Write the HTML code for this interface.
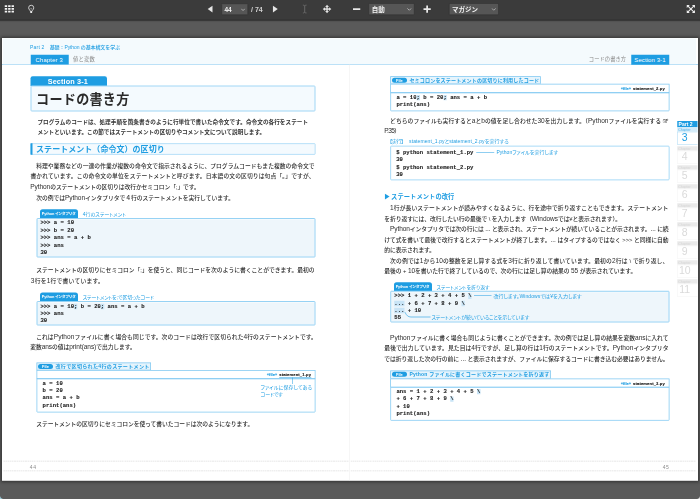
<!DOCTYPE html>
<html lang="ja"><head><meta charset="utf-8"><title>コードの書き方</title>
<style>
html,body{margin:0;padding:0;}
body{width:700px;height:499px;overflow:hidden;background:#5a5a5a;position:relative;}
#wrap{position:absolute;left:0;top:0;width:2800px;height:1996px;transform:scale(0.25);transform-origin:0 0;font-family:"Liberation Sans","Noto Sans CJK JP",sans-serif;}
#tb{position:absolute;left:-20px;top:0;width:2840px;height:76.4px;background:#3b3b3b;border-bottom:6.8px solid #353535;box-shadow:0 1.2px 4.8px 0.4px rgba(0,0,0,.5);}
#pg{position:absolute;left:7.6px;top:151.6px;width:2784.8px;height:1771.2px;background:#fff;box-shadow:0 0 12px 4px rgba(0,0,0,.45);}
.r{position:absolute;}
.ic{position:absolute;display:block;overflow:visible;}
.l{position:absolute;white-space:nowrap;line-height:40px;font-size:23.2px;color:#333;font-family:"Liberation Sans","Noto Sans CJK JP",sans-serif;}
.b{font-weight:500;color:#2e2e2e;}
.e{font-size:1.13em;}
.in{font-weight:700;font-size:22.4px;color:#333;}
.c{font-family:"Liberation Mono",monospace;font-weight:700;font-size:22.4px;line-height:32px;color:#1c1c1c;white-space:pre;-webkit-text-stroke:0.4px #1c1c1c;}
.hl{background:linear-gradient(#c8e4f6,#c8e4f6) no-repeat 0 4.4px / 100% 24px;}
.hp{font-size:20px;line-height:28px;font-weight:500;color:#1e9de2;font-family:"Liberation Sans","Noto Sans CJK JP",sans-serif;}
.ch{font-family:"Liberation Sans",sans-serif;font-size:24px;line-height:32px;color:#fff;}
.chg{font-size:21.2px;line-height:32px;color:#8a8a8a;}
.sec{font-size:29.2px;line-height:40px;font-weight:700;color:#fff;}
.h1{font-size:52.4px;line-height:76px;font-weight:700;color:#2a2a2a;}
.h2{font-size:32px;line-height:44px;font-weight:700;color:#1e9de2;}
.h3{font-size:25px;line-height:40px;font-weight:700;color:#1e9de2;}
.tab{position:absolute;background:#1e9de2;border-radius:10.4px 10.4px 0 0;}
.tbx{font-size:15.4px;line-height:32px;font-weight:700;color:#fff;font-feature-settings:"palt";}
.ttl{font-size:19.8px;line-height:32px;font-weight:400;color:#1e9de2;font-feature-settings:"palt";}
.pill{position:absolute;width:60px;height:20px;border-radius:10px;background:#1e9de2;text-align:center;}
.pill span{display:block;font-family:"Liberation Sans","Noto Sans CJK JP",sans-serif;font-size:16px;line-height:19.2px;font-weight:900;color:#fff;}
.ftl{font-size:20.2px;line-height:29.6px;font-weight:700;color:#1e9de2;}
.fn{font-size:16.4px;line-height:24px;font-weight:700;color:#111;-webkit-text-stroke:0.4px currentColor;}
.fb{color:#1e9de2;}
.an{font-size:20px;line-height:28px;color:#1e9de2;font-feature-settings:"palt";}
.ex{font-size:20px;line-height:28px;color:#1e9de2;font-feature-settings:"palt";}
.pn{font-size:20px;line-height:28px;color:#8c8c8c;}
.pt2{font-size:20px;line-height:28px;font-weight:700;color:#fff;}
.cl{font-size:14px;line-height:20px;}
.cn{font-size:42px;line-height:52px;text-align:center;font-weight:300;}
.sel{position:absolute;background:#565656;border:2px solid #2e2e2e;box-sizing:border-box;border-radius:3.2px;}
.sel span{position:absolute;top:0;font-family:"Liberation Sans","Noto Sans CJK JP",sans-serif;font-size:26px;line-height:44px;font-weight:700;color:#f4f4f4;white-space:nowrap;}
.sel .chev{position:absolute;right:8.8px;top:16.8px;width:18.4px;height:11.2px;}
.tbt{font-family:"Liberation Sans",sans-serif;font-size:28px;line-height:40px;font-weight:700;color:#cfcfcf;}
</style></head>
<body>
<div id="wrap">
<div id="tb"></div>
<svg class="ic" style="left:18.8px;top:20.8px;width:36.8px;height:29.2px" viewBox="0 0 9.2 7.3"><g fill="#f6f6f6"><rect x="0.00" y="0.00" width="2.4" height="1.75"/><rect x="3.40" y="0.00" width="2.4" height="1.75"/><rect x="6.80" y="0.00" width="2.4" height="1.75"/><rect x="0.00" y="2.75" width="2.4" height="1.75"/><rect x="3.40" y="2.75" width="2.4" height="1.75"/><rect x="6.80" y="2.75" width="2.4" height="1.75"/><rect x="0.00" y="5.50" width="2.4" height="1.75"/><rect x="3.40" y="5.50" width="2.4" height="1.75"/><rect x="6.80" y="5.50" width="2.4" height="1.75"/></g></svg>
<svg class="ic" style="left:112.4px;top:18.8px;width:25.6px;height:34.4px" viewBox="0 0 6.4 8.6"><path d="M3.2 0.5a2.55 2.55 0 0 0-2.55 2.55c0 1 .5 1.6 1 2.2c.4.5.6.9.7 1.4h1.7c.1-.5.3-.9.7-1.4c.5-.6 1-1.2 1-2.2A2.55 2.55 0 0 0 3.2.5z" fill="none" stroke="#ededed" stroke-width="0.8"/><path d="M2.6 3.4L3.2 4.6L3.8 3.4" fill="none" stroke="#ddd" stroke-width="0.45"/><rect x="2.25" y="6.55" width="1.9" height="1.75" rx="0.5" fill="#ededed"/></svg>
<svg class="ic" style="left:829.6px;top:21.6px;width:20.8px;height:28.8px" viewBox="0 0 5.2 7.2"><path d="M5 0.2V7L0.2 3.6z" fill="#e6e6e6"/></svg>
<div class="sel" style="left:886.4px;top:14px;width:105.6px;height:46px;"><span style="left:9.2px">44</span><svg class="chev" viewBox="0 0 5 3"><path d="M0.4 0.4L2.5 2.5L4.6 0.4" fill="none" stroke="#ddd" stroke-width="0.7"/></svg></div>
<div class="l tbt" style="top:18px;left:1004px;">/ 74</div>
<svg class="ic" style="left:1091.2px;top:21.6px;width:20.8px;height:28.8px" viewBox="0 0 5.2 7.2"><path d="M0.2 0.2V7L5 3.6z" fill="#e6e6e6"/></svg>
<svg class="ic" style="left:1210.4px;top:19.2px;width:17.6px;height:34.4px" viewBox="0 0 4.4 8.6"><path d="M0.4 0.4C1.5 0.4 2.2 0.8 2.2 1.4C2.2 0.8 2.9 0.4 4 0.4M0.4 8.2C1.5 8.2 2.2 7.8 2.2 7.2C2.2 7.8 2.9 8.2 4 8.2M2.2 1.4V7.2" fill="none" stroke="#737373" stroke-width="0.8"/></svg>
<svg class="ic" style="left:1291.2px;top:18.8px;width:34.4px;height:34.4px" viewBox="0 0 8.6 8.6"><g fill="#e2e2e2"><path d="M4.3 0L6.2 2.3H2.4z"/><path d="M4.3 8.6L6.2 6.3H2.4z"/><path d="M0 4.3L2.3 2.4V6.2z"/><path d="M8.6 4.3L6.3 2.4V6.2z"/><rect x="3.6" y="1.8" width="1.4" height="5"/><rect x="1.8" y="3.6" width="5" height="1.4"/></g></svg>
<div class="r" style="left:1412px;top:33.2px;width:29.2px;height:6.8px;background:#e8e8e8;"></div>
<div class="sel" style="left:1474.4px;top:13.2px;width:183.2px;height:46.4px;"><span style="left:10.4px">自動</span><svg class="chev" viewBox="0 0 5 3"><path d="M0.4 0.4L2.5 2.5L4.6 0.4" fill="none" stroke="#ddd" stroke-width="0.7"/></svg></div>
<div class="r" style="left:1693.6px;top:33.2px;width:29.6px;height:6.8px;background:#e8e8e8;"></div>
<div class="r" style="left:1705px;top:21.6px;width:6.8px;height:29.6px;background:#e8e8e8;"></div>
<div class="sel" style="left:1796px;top:13.2px;width:199.2px;height:46.4px;"><span style="left:9.6px">マガジン</span><svg class="chev" viewBox="0 0 5 3"><path d="M0.4 0.4L2.5 2.5L4.6 0.4" fill="none" stroke="#ddd" stroke-width="0.7"/></svg></div>
<svg class="ic" style="left:2747.2px;top:20px;width:32.8px;height:32px" viewBox="0 0 8.2 8"><g fill="#efefef"><path d="M0 0H3L0 3z"/><path d="M8.2 0H5.2L8.2 3z"/><path d="M0 8H3L0 5z"/><path d="M8.2 8H5.2L8.2 5z"/></g><path d="M1.2 1.2L7 6.8M7 1.2L1.2 6.8" stroke="#efefef" stroke-width="1.1"/></svg>
<div class="r" style="left:0px;top:1984px;width:12px;height:12px;background:radial-gradient(circle at 100% 0,rgba(0,0,0,0) 9.6px,#9ccbd9 12.4px);"></div>
<div class="r" style="left:2790.4px;top:1986.4px;width:9.6px;height:9.6px;background:radial-gradient(circle at 0 0,rgba(0,0,0,0) 7.2px,#dcdcdc 10px);"></div>
<div id="pg"></div>
<div class="r" style="left:7.6px;top:256.8px;width:2784px;height:2.8px;background:#8ecdf0;"></div>
<div class="r" style="left:12.4px;top:154.4px;width:2771.2px;height:102.4px;background:#f4fafd;"></div>
<div class="r" style="left:1397.6px;top:258px;width:2.4px;height:1664px;background:#ececec;"></div>
<div class="l hp" style="top:173.2px;left:120px;letter-spacing:0.84px;">Part 2</div>
<div class="l hp" style="top:173.2px;left:198.8px;letter-spacing:-0.368px;">基礎：Python の基本構文を学ぶ</div>
<div class="r" style="left:122.8px;top:218.8px;width:152px;height:39.6px;background:#1e9de2;"></div>
<div class="l ch" style="top:222.8px;left:141.88px;letter-spacing:0.536px;">Chapter 3</div>
<div class="l chg" style="top:222px;left:291.56px;letter-spacing:0.832px;">値と変数</div>
<div class="r" style="left:122.4px;top:304.8px;width:305.6px;height:39.2px;background:#1e9de2;border-radius:8.8px 8.8px 0 0;"></div>
<div class="l sec" style="top:304px;left:190.84px;letter-spacing:0.456px;">Section 3-1</div>
<div class="r" style="left:122.4px;top:342.4px;width:1140px;height:104px;background:#f4fafe;border:4px solid #a0d6f5;border-radius:4.8px;box-sizing:border-box;"></div>
<div class="l h1" style="top:357.6px;left:144.32px;letter-spacing:1.008px;">コードの書き方</div>
<div class="l in" style="top:469.6px;left:149.52px;letter-spacing:0.232px;">プログラムのコードは、処理手順を箇条書きのように行単位で書いた命令文です。命令文の各行をステート</div>
<div class="l in" style="top:508.4px;left:149.52px;letter-spacing:-0.052px;">メントといいます。この節ではステートメントの区切りやコメント文について説明します。</div>
<div class="r" style="left:121.6px;top:573.2px;width:1140.8px;height:45.6px;background:#f4fafe;border:3.8px solid #a0d6f5;border-radius:4px;box-sizing:border-box;"></div>
<div class="r" style="left:121.6px;top:573.2px;width:8px;height:45.6px;background:#1e9de2;"></div>
<div class="l h2" style="top:574.4px;left:144.32px;letter-spacing:0.16px;">ステートメント（命令文）の区切り</div>
<div class="l b" style="top:642.8px;left:144.8px;letter-spacing:0.04px;">料理や業務などの一連の作業が複数の命令文で指示されるように、プログラムコードもまた複数の命令文で</div>
<div class="l b" style="top:684.8px;left:121.6px;letter-spacing:0.368px;">書かれています。この命令文の単位をステートメントと呼びます。日本語の文の区切りは句点「。」ですが、</div>
<div class="l b" style="top:726.8px;left:121.08px;letter-spacing:-0.332px;"><span class="e">Python</span>のステートメントの区切りは改行かセミコロン「;」です。</div>
<div class="l b" style="top:768.8px;left:144.68px;letter-spacing:-0.176px;">次の例では<span class="e">Python</span>インタプリタで４行のステートメントを実行しています。</div>
<div class="tab" style="left:160px;top:836.8px;width:152.4px;height:36px;"></div>
<div class="l tbx" style="top:838.8px;left:166.96px;letter-spacing:-0.38px;">Python インタプリタ</div>
<div class="l ttl" style="top:839.6px;left:330.76px;letter-spacing:0.284px;">4行のステートメント</div>
<div class="r" style="left:145.6px;top:871.6px;width:1116.8px;height:158.8px;background:#eef6fb;border:4px solid #96d2f4;border-radius:4px;box-shadow:inset 0 0 0 2px #fbfdff;box-sizing:border-box;"></div>
<div class="l c" style="top:874.4px;left:161.6px;">&gt;&gt;&gt; a = 10</div>
<div class="l c" style="top:904px;left:161.6px;">&gt;&gt;&gt; b = 20</div>
<div class="l c" style="top:934px;left:161.6px;">&gt;&gt;&gt; ans = a + b</div>
<div class="l c" style="top:964px;left:161.6px;">&gt;&gt;&gt; ans</div>
<div class="l c" style="top:992.8px;left:161.6px;">30</div>
<div class="l b" style="top:1060.4px;left:144.8px;letter-spacing:-0.052px;">ステートメントの区切りにセミコロン「;」を使うと、同じコードを次のように書くことができます。最初の</div>
<div class="l b" style="top:1102.4px;left:123.08px;letter-spacing:0.9px;"><span class="e">3</span>行を<span class="e">1</span>行で書いています。</div>
<div class="tab" style="left:160px;top:1170px;width:152.4px;height:35.2px;"></div>
<div class="l tbx" style="top:1172px;left:166.96px;letter-spacing:-0.38px;">Python インタプリタ</div>
<div class="l ttl" style="top:1172.8px;left:330.76px;letter-spacing:-0.368px;">ステートメントを;で区切ったコード</div>
<div class="r" style="left:145.6px;top:1204px;width:1116.8px;height:98px;background:#eef6fb;border:4px solid #96d2f4;border-radius:4px;box-shadow:inset 0 0 0 2px #fbfdff;box-sizing:border-box;"></div>
<div class="l c" style="top:1208px;left:161.6px;">&gt;&gt;&gt; a = 10<span class="hl">;</span> b = 20<span class="hl">;</span> ans = a + b</div>
<div class="l c" style="top:1238px;left:161.6px;">&gt;&gt;&gt; ans</div>
<div class="l c" style="top:1266.8px;left:161.6px;">30</div>
<div class="l b" style="top:1325.2px;left:144.68px;letter-spacing:0.216px;">これは<span class="e">Python</span>ファイルに書く場合も同じです。次のコードは改行で区切られた<span class="e">4</span>行のステートメントです。</div>
<div class="l b" style="top:1367.2px;left:121.08px;letter-spacing:-0.288px;">変数<span class="e">ans</span>の値は<span class="e">print(ans)</span>で出力します。</div>
<div class="r" style="left:145.6px;top:1450.4px;width:458.4px;height:31.6px;background:#e6f4fc;border:3.4px solid #7fc8f1;box-sizing:border-box;"></div>
<div class="pill" style="left:152px;top:1456px;"><span>File</span></div>
<div class="l ftl" style="top:1450.8px;left:222px;letter-spacing:1.22px;">改行で区切られた4行のステートメント</div>
<div class="r" style="left:145.6px;top:1480px;width:1116.8px;height:36.4px;background:#fff;border:3.4px solid #7fc8f1;box-sizing:border-box;"></div>
<div class="r" style="left:145.6px;top:1514.4px;width:1116.8px;height:135.2px;background:#fff;border:3.4px solid #7fc8f1;border-radius:0 0 4px 4px;box-sizing:border-box;"></div>
<div class="l fn fb" style="top:1485.2px;left:1067.36px;letter-spacing:-0.04px;">«file»</div>
<div class="l fn" style="top:1485.2px;left:1116.96px;letter-spacing:0.568px;">statement_1.py</div>
<div class="l c" style="top:1516px;left:170.4px;">a = 10</div>
<div class="l c" style="top:1545.6px;left:170.4px;">b = 20</div>
<div class="l c" style="top:1574.8px;left:170.4px;">ans = a + b</div>
<div class="l c" style="top:1605.2px;left:170.4px;">print(ans)</div>
<div class="r" style="left:1116.8px;top:1509.6px;width:128px;height:2px;background:#1e9de2;"></div>
<div class="r" style="left:1168.8px;top:1510.4px;width:2.4px;height:25.6px;background:#1e9de2;"></div>
<div class="l an" style="top:1534.8px;left:1042.44px;letter-spacing:0.58px;">ファイルに保存してある</div>
<div class="l an" style="top:1561.6px;left:1042.44px;letter-spacing:-0.556px;">コードです</div>
<div class="l b" style="top:1675.2px;left:144.68px;letter-spacing:-0.252px;">ステートメントの区切りにセミコロンを使って書いたコードは次のようになります。</div>
<div class="r" style="left:14px;top:1842.8px;width:1382px;height:2.8px;background:repeating-linear-gradient(90deg,#dedede 0,#dedede 4.4px,#efefef 4.4px,#efefef 8.8px);"></div>
<div class="r" style="left:14px;top:1882.4px;width:1382px;height:2.8px;background:repeating-linear-gradient(90deg,#dedede 0,#dedede 4.4px,#efefef 4.4px,#efefef 8.8px);"></div>
<div class="r" style="left:1402px;top:1842.8px;width:1382px;height:2.8px;background:repeating-linear-gradient(90deg,#dedede 0,#dedede 4.4px,#efefef 4.4px,#efefef 8.8px);"></div>
<div class="r" style="left:1402px;top:1882.4px;width:1382px;height:2.8px;background:repeating-linear-gradient(90deg,#dedede 0,#dedede 4.4px,#efefef 4.4px,#efefef 8.8px);"></div>
<div class="l pn" style="top:1854px;left:119.2px;letter-spacing:2.676px;">44</div>
<div class="l pn" style="top:1854px;left:2650.8px;letter-spacing:2.476px;">45</div>
<div class="l chg" style="top:222px;left:2355.16px;letter-spacing:0.196px;">コードの書き方</div>
<div class="r" style="left:2524.8px;top:218.8px;width:152px;height:39.6px;background:#1e9de2;"></div>
<div class="l ch" style="top:222.8px;left:2537.48px;letter-spacing:0.328px;">Section 3-1</div>
<div class="r" style="left:1561.2px;top:305.2px;width:601.6px;height:32px;background:#e6f4fc;border:3.4px solid #7fc8f1;box-sizing:border-box;"></div>
<div class="pill" style="left:1567.6px;top:310.8px;"><span>File</span></div>
<div class="l ftl" style="top:305.6px;left:1637.6px;letter-spacing:0.596px;">セミコロンをステートメントの区切りに利用したコード</div>
<div class="r" style="left:1561.2px;top:335.2px;width:1116.4px;height:36.8px;background:#fff;border:3.4px solid #7fc8f1;box-sizing:border-box;"></div>
<div class="r" style="left:1561.2px;top:370px;width:1116.4px;height:75.2px;background:#fff;border:3.4px solid #7fc8f1;border-radius:0 0 4px 4px;box-sizing:border-box;"></div>
<div class="l fn fb" style="top:340.4px;left:2482.56px;letter-spacing:-0.04px;">«file»</div>
<div class="l fn" style="top:340.4px;left:2532.16px;letter-spacing:0.568px;">statement_2.py</div>
<div class="l c" style="top:372.4px;left:1585.6px;">a = 10<span class="hl">;</span> b = 20<span class="hl">;</span> ans = a + b</div>
<div class="l c" style="top:402px;left:1585.6px;">print(ans)</div>
<div class="l b" style="top:462.4px;left:1560.4px;letter-spacing:0.136px;">どちらのファイルも実行すると<span class="e">a</span>と<span class="e">b</span>の値を足し合わせた<span class="e">30</span>を出力します。（<span class="e">Python</span>ファイルを実行する ☞</div>
<div class="l b" style="top:504.4px;left:1536.68px;letter-spacing:-2.488px;"><span class="e">P.35</span>）</div>
<div class="l ex" style="top:550.8px;left:1558.4px;letter-spacing:-1.2px;">【実行】</div>
<div class="l ex" style="top:550.8px;left:1636.4px;letter-spacing:0.388px;">statement_1.pyとstatement_2.pyを実行する</div>
<div class="r" style="left:1561.2px;top:583.2px;width:1116.4px;height:137.6px;background:#fff;border:3.8px solid #8ccff4;border-radius:4.8px;box-sizing:border-box;"></div>
<div class="l c" style="top:592.4px;left:1584.8px;">$ python statement_1.py</div>
<div class="l c" style="top:622.4px;left:1584.8px;">30</div>
<div class="l c" style="top:652px;left:1584.8px;">$ python statement_2.py</div>
<div class="l c" style="top:682px;left:1584.8px;">30</div>
<div class="r" style="left:1904.8px;top:607.6px;width:72px;height:2.4px;background:#1e9de2;"></div>
<div class="l an" style="top:594.4px;left:1985.64px;letter-spacing:0.208px;">Pythonファイルを実行します</div>
<svg class="ic" style="left:1539.2px;top:774.4px;width:20px;height:24.8px" viewBox="0 0 5 6.2"><path d="M0.2 0.2L4.8 3.1L0.2 6z" fill="#1e9de2"/></svg>
<div class="l h3" style="top:766.8px;left:1564.2px;letter-spacing:0.36px;">ステートメントの改行</div>
<div class="l b" style="top:812.4px;left:1560.4px;letter-spacing:0.272px;"><span class="e">1</span>行が長いステートメントが読みやすくなるように、行を途中で折り返すこともできます。ステートメント</div>
<div class="l b" style="top:854.4px;left:1537.08px;letter-spacing:-0.308px;">を折り返すには、改行したい行の最後で \ を入力します（<span class="e">Windows</span>では¥と表示されます）。</div>
<div class="l b" style="top:896.4px;left:1560.4px;letter-spacing:-0.436px;"><span class="e">Python</span>インタプリタでは次の行には <span class="e">...</span> と表示され、ステートメントが続いていることが示されます。<span class="e">...</span> に続</div>
<div class="l b" style="top:938.4px;left:1537.2px;letter-spacing:-0.156px;">けて式を書いて最後で改行するとステートメントが終了します。<span class="e">...</span> はタイプするのではなく &gt;&gt;&gt; と同様に自動</div>
<div class="l b" style="top:980.4px;left:1537.08px;letter-spacing:-0.432px;">的に表示されます。</div>
<div class="l b" style="top:1022.4px;left:1560.4px;letter-spacing:0.548px;">次の例では<span class="e">1</span>から<span class="e">10</span>の整数を足し算する式を<span class="e">3</span>行に折り返して書いています。最初の<span class="e">2</span>行は \ で折り返し、</div>
<div class="l b" style="top:1064.4px;left:1537.08px;letter-spacing:-0.26px;">最後の + <span class="e">10</span>を書いた行で終了しているので、次の行には足し算の結果の <span class="e">55</span> が表示されています。</div>
<div class="tab" style="left:1575.6px;top:1128.8px;width:152.4px;height:35.2px;"></div>
<div class="l tbx" style="top:1130.8px;left:1582.56px;letter-spacing:-0.38px;">Python インタプリタ</div>
<div class="l ttl" style="top:1131.6px;left:1746.36px;letter-spacing:-0.088px;">ステートメントを折り返す</div>
<div class="r" style="left:1561.2px;top:1162.8px;width:1116.4px;height:127.6px;background:#eef6fb;border:4px solid #96d2f4;border-radius:4px;box-shadow:inset 0 0 0 2px #fbfdff;box-sizing:border-box;"></div>
<div class="l c" style="top:1166.8px;left:1577.2px;">&gt;&gt;&gt; 1 + 2 + 3 + 4 + 5 <span class="hl">\</span></div>
<div class="l c" style="top:1196px;left:1577.2px;"><span class="hl">...</span> + 6 + 7 + 8 + 9 <span class="hl">\</span></div>
<div class="l c" style="top:1224px;left:1577.2px;"><span class="hl">...</span> + 10</div>
<div class="l c" style="top:1252px;left:1577.2px;">55</div>
<div class="r" style="left:1896px;top:1182px;width:70.4px;height:2.4px;background:#1e9de2;"></div>
<div class="l an" style="top:1168.8px;left:1973.64px;letter-spacing:0.412px;">改行します。Windowsでは¥を入力します</div>
<svg class="ic" style="left:1600px;top:1244px;width:128px;height:32px" viewBox="0 0 32 8"><path d="M5 1.2C6.5 4.5 8 6 11 6H30.5" fill="none" stroke="#1e9de2" stroke-width="0.6"/></svg>
<div class="l an" style="top:1254px;left:1725.64px;letter-spacing:-0.332px;">ステートメントが続いていることを示しています</div>
<div class="l b" style="top:1329.6px;left:1560.4px;letter-spacing:-0.084px;"><span class="e">Python</span>ファイルに書く場合も同じように書くことができます。次の例では足し算の結果を変数<span class="e">ans</span>に入れて</div>
<div class="l b" style="top:1371.8px;left:1537.2px;letter-spacing:0.224px;">最後で出力しています。見た目は<span class="e">4</span>行ですが、足し算の行は<span class="e">1</span>行のステートメントです。<span class="e">Python</span>インタプリタ</div>
<div class="l b" style="top:1414px;left:1537.2px;letter-spacing:-0.184px;">では折り返した次の行の前に <span class="e">...</span> と表示されますが、ファイルに保存するコードに書き込む必要はありません。</div>
<div class="r" style="left:1561.2px;top:1481.6px;width:642.4px;height:34.8px;background:#e6f4fc;border:3.4px solid #7fc8f1;box-sizing:border-box;"></div>
<div class="pill" style="left:1567.6px;top:1487.2px;"><span>File</span></div>
<div class="l ftl" style="top:1482px;left:1637.6px;letter-spacing:0.736px;">Python ファイルに書くコードでステートメントを折り返す</div>
<div class="r" style="left:1561.2px;top:1514.4px;width:1116.4px;height:36px;background:#fff;border:3.4px solid #7fc8f1;box-sizing:border-box;"></div>
<div class="r" style="left:1561.2px;top:1548.4px;width:1116.4px;height:134.8px;background:#fff;border:3.4px solid #7fc8f1;border-radius:0 0 4px 4px;box-sizing:border-box;"></div>
<div class="l fn fb" style="top:1519.6px;left:2482.56px;letter-spacing:-0.04px;">«file»</div>
<div class="l fn" style="top:1519.6px;left:2532.16px;letter-spacing:0.568px;">statement_3.py</div>
<div class="l c" style="top:1548.4px;left:1585.6px;">ans = 1 + 2 + 3 + 4 + 5 <span class="hl">\</span></div>
<div class="l c" style="top:1578.4px;left:1585.6px;">+ 6 + 7 + 8 + 9 <span class="hl">\</span></div>
<div class="l c" style="top:1608px;left:1585.6px;">+ 10</div>
<div class="l c" style="top:1639.2px;left:1585.6px;">print(ans)</div>
<div class="r" style="left:2708.8px;top:483.6px;width:81.2px;height:25.2px;background:#1e9de2;"></div>
<div class="l pt2" style="top:481.2px;left:2714.4px;letter-spacing:0px;">Part 2</div>
<div class="r" style="left:2708.8px;top:508.8px;width:81.2px;height:18.4px;background:#d3ebf9;"></div>
<div class="l cl" style="top:508px;left:2712.8px;color:#57b4ea;">Chapter</div>
<div class="r" style="left:2708.8px;top:527.2px;width:81.2px;height:50.4px;background:#fff;border:2.8px solid #a6d7f2;border-right:none;box-sizing:border-box;"></div>
<div class="l cn" style="left:2698.4px;width:81.2px;top:523.6px;color:#1e9de2;font-weight:400;">3</div>
<div class="r" style="left:2708.8px;top:584.8px;width:81.2px;height:18.4px;background:#eaeaea;"></div>
<div class="l cl" style="top:584px;left:2712.8px;color:#d6d6d6;">Chapter</div>
<div class="r" style="left:2708.8px;top:603.2px;width:81.2px;height:50.4px;background:#fff;border:2.8px solid #f2f2f2;border-right:none;box-sizing:border-box;"></div>
<div class="l cn" style="left:2698.4px;width:81.2px;top:601.2px;color:#dadada;font-weight:300;">4</div>
<div class="r" style="left:2708.8px;top:660.8px;width:81.2px;height:18.4px;background:#eaeaea;"></div>
<div class="l cl" style="top:660px;left:2712.8px;color:#d6d6d6;">Chapter</div>
<div class="r" style="left:2708.8px;top:679.2px;width:81.2px;height:50.4px;background:#fff;border:2.8px solid #f2f2f2;border-right:none;box-sizing:border-box;"></div>
<div class="l cn" style="left:2698.4px;width:81.2px;top:677.2px;color:#dadada;font-weight:300;">5</div>
<div class="r" style="left:2708.8px;top:736.8px;width:81.2px;height:18.4px;background:#eaeaea;"></div>
<div class="l cl" style="top:736px;left:2712.8px;color:#d6d6d6;">Chapter</div>
<div class="r" style="left:2708.8px;top:755.2px;width:81.2px;height:50.4px;background:#fff;border:2.8px solid #f2f2f2;border-right:none;box-sizing:border-box;"></div>
<div class="l cn" style="left:2698.4px;width:81.2px;top:753.2px;color:#dadada;font-weight:300;">6</div>
<div class="r" style="left:2708.8px;top:812.8px;width:81.2px;height:18.4px;background:#eaeaea;"></div>
<div class="l cl" style="top:812px;left:2712.8px;color:#d6d6d6;">Chapter</div>
<div class="r" style="left:2708.8px;top:831.2px;width:81.2px;height:50.4px;background:#fff;border:2.8px solid #f2f2f2;border-right:none;box-sizing:border-box;"></div>
<div class="l cn" style="left:2698.4px;width:81.2px;top:829.2px;color:#dadada;font-weight:300;">7</div>
<div class="r" style="left:2708.8px;top:888.8px;width:81.2px;height:18.4px;background:#eaeaea;"></div>
<div class="l cl" style="top:888px;left:2712.8px;color:#d6d6d6;">Chapter</div>
<div class="r" style="left:2708.8px;top:907.2px;width:81.2px;height:50.4px;background:#fff;border:2.8px solid #f2f2f2;border-right:none;box-sizing:border-box;"></div>
<div class="l cn" style="left:2698.4px;width:81.2px;top:905.2px;color:#dadada;font-weight:300;">8</div>
<div class="r" style="left:2708.8px;top:964.8px;width:81.2px;height:18.4px;background:#eaeaea;"></div>
<div class="l cl" style="top:964px;left:2712.8px;color:#d6d6d6;">Chapter</div>
<div class="r" style="left:2708.8px;top:983.2px;width:81.2px;height:50.4px;background:#fff;border:2.8px solid #f2f2f2;border-right:none;box-sizing:border-box;"></div>
<div class="l cn" style="left:2698.4px;width:81.2px;top:981.2px;color:#dadada;font-weight:300;">9</div>
<div class="r" style="left:2708.8px;top:1040.8px;width:81.2px;height:18.4px;background:#eaeaea;"></div>
<div class="l cl" style="top:1040px;left:2712.8px;color:#d6d6d6;">Chapter</div>
<div class="r" style="left:2708.8px;top:1059.2px;width:81.2px;height:50.4px;background:#fff;border:2.8px solid #f2f2f2;border-right:none;box-sizing:border-box;"></div>
<div class="l cn" style="left:2698.4px;width:81.2px;top:1057.2px;color:#dadada;font-weight:300;">10</div>
<div class="r" style="left:2708.8px;top:1116.8px;width:81.2px;height:18.4px;background:#eaeaea;"></div>
<div class="l cl" style="top:1116px;left:2712.8px;color:#d6d6d6;">Chapter</div>
<div class="r" style="left:2708.8px;top:1135.2px;width:81.2px;height:50.4px;background:#fff;border:2.8px solid #f2f2f2;border-right:none;box-sizing:border-box;"></div>
<div class="l cn" style="left:2698.4px;width:81.2px;top:1133.2px;color:#dadada;font-weight:300;">11</div>
</div>
</body></html>
